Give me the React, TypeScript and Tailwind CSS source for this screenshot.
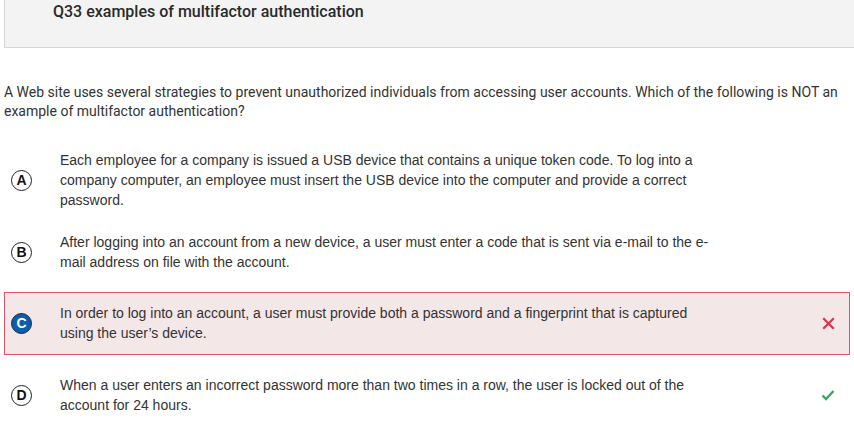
import React from 'react';

type Option = {
  letter: string;
  text: string;
  selected?: boolean;
  wrong?: boolean;
  correct?: boolean;
  className: string;
};

const options: Option[] = [
  {
    letter: 'A',
    text: 'Each employee for a company is issued a USB device that contains a unique token code. To log into a company computer, an employee must insert the USB device into the computer and provide a correct password.',
    className: 'mt-[18px]',
  },
  {
    letter: 'B',
    text: 'After logging into an account from a new device, a user must enter a code that is sent via e-mail to the e-mail address on file with the account.',
    className: 'mt-0',
  },
  {
    letter: 'C',
    text: 'In order to log into an account, a user must provide both a password and a fingerprint that is captured using the user\u2019s device.',
    selected: true,
    wrong: true,
    className: 'mt-[9px]',
  },
  {
    letter: 'D',
    text: 'When a user enters an incorrect password more than two times in a row, the user is locked out of the account for 24 hours.',
    correct: true,
    className: 'mt-[9px]',
  },
];

const Cross = () => (
  <svg width="13" height="13" viewBox="0 0 13 13">
    <path d="M2 2 L11 11 M11 2 L2 11" stroke="#d2354f" strokeWidth="2.2" strokeLinecap="square" />
  </svg>
);

const Check = () => (
  <svg width="14" height="12" viewBox="0 0 14 12">
    <path d="M1.5 6.5 L5 10 L12.5 2" stroke="#3ca55c" strokeWidth="2.4" fill="none" />
  </svg>
);

const App = () => {
  return (
    <div className="w-[854px] h-[423px] overflow-hidden bg-white text-[#333]">
      {/* Question header */}
      <div className="ml-[4px] h-[48px] border-l border-b border-[#d6d6d6] bg-[#f3f3f3] pl-[48px] pt-[1px]">
        <h2 className="font-['Roboto',sans-serif] text-[16px] font-medium leading-[22px] text-[#2a2a2a]">
          Q33 examples of multifactor authentication
        </h2>
      </div>

      {/* Stem */}
      <p className="mt-[35px] px-[4px] font-['Roboto',sans-serif] text-[14px] leading-[19px] text-[#333]">
        A Web site uses several strategies to prevent unauthorized individuals from accessing user accounts. Which of the following is NOT an example of multifactor authentication?
      </p>

      {/* Options */}
      <div className="flex flex-col">
        {options.map((o) => (
          <div
            key={o.letter}
            className={`${o.className} ml-[4px] mr-[4px] flex items-center border pt-[10px] ${
              o.wrong ? 'border-[#e05666] bg-[#f3e7e7] pb-[11px]' : 'border-transparent pb-[10px]'
            }`}
          >
            <div className="flex w-[55px] shrink-0 pl-[6px]">
              <span
                className={`flex h-[21px] w-[21px] items-center justify-center rounded-full border-[1.5px] font-['Liberation_Sans',Arial,sans-serif] text-[14px] font-bold leading-none ${
                  o.selected ? 'border-[#1b2a3a] bg-[#0b5dae] text-white' : 'border-[#222] bg-white text-[#111]'
                }`}
              >
                {o.letter}
              </span>
            </div>
            <p className="w-[652px] font-['Liberation_Sans',Arial,sans-serif] text-[14px] leading-[20px] text-[#333]">
              {o.text}
            </p>
            <div className="flex flex-1 justify-end pr-[14px]">
              {o.wrong && <Cross />}
              {o.correct && <Check />}
            </div>
          </div>
        ))}
      </div>
    </div>
  );
};

export default App;
